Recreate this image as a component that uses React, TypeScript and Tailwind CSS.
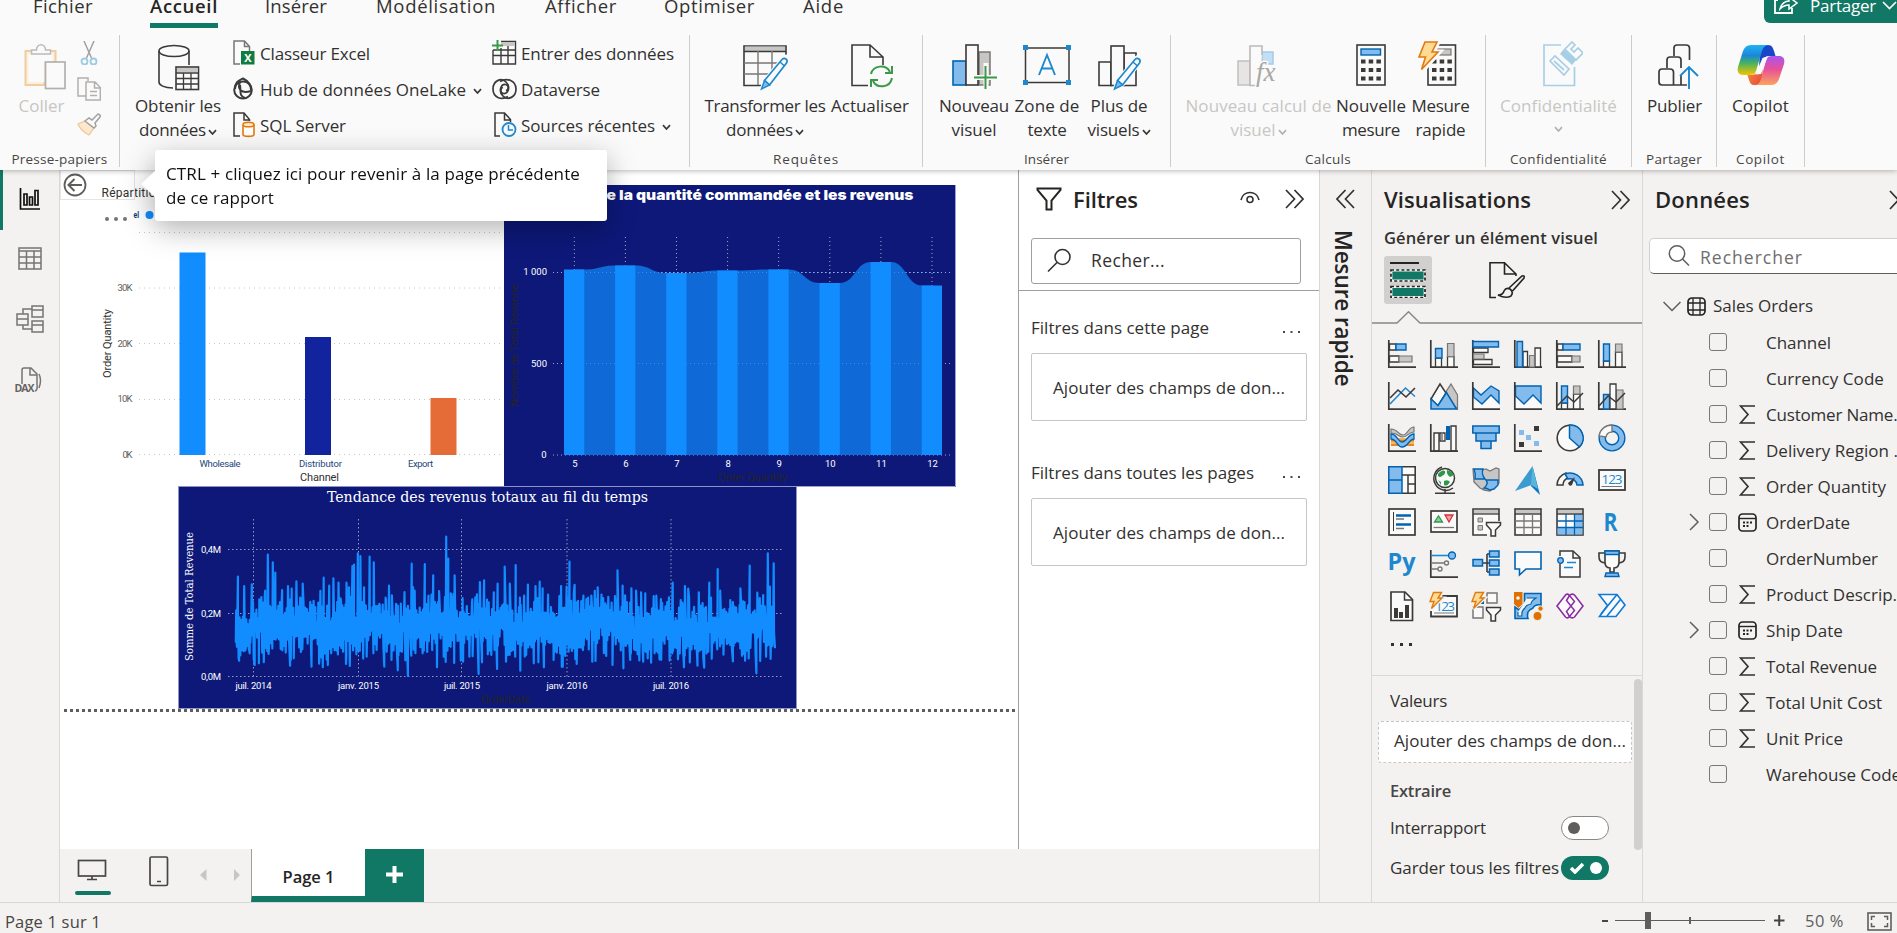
import { useLayoutEffect, useRef, useState } from "react";
import type { ReactNode } from "react";

const D = "#3b3a39";
const B = "#0063b1";
const F = "#83bcec";
const G = "#c8c6c4";
const M = "#797775";
const W = "#fafafa";

/* Single-line label whose tracking is computed so that it spans `w` pixels. */
function T({ w, className = "", children }: { w?: number; className?: string; children: string }) {
  const ref = useRef<HTMLSpanElement>(null);
  const [ls, setLs] = useState(0);
  useLayoutEffect(() => {
    if (!ref.current || !w) return;
    const vertical = ref.current.offsetHeight > ref.current.offsetWidth;
    const natural = vertical ? ref.current.offsetHeight : ref.current.getBoundingClientRect().width;
    setLs((w - natural) / children.length);
  }, [w, children]);
  return (
    <span ref={ref} className={`inline-block whitespace-nowrap ${className}`} style={{ letterSpacing: `${ls}px` }}>
      {children}
    </span>
  );
}

function Pic({ x, y, w, h, className = "", children }: { x: number; y: number; w: number; h: number; className?: string; children: ReactNode }) {
  return (
    <svg width={w} height={h} viewBox={`${x} ${y} ${w} ${h}`} fill="none" className={`block shrink-0 ${className}`}>
      {children}
    </svg>
  );
}

function Caret({ className = "text-[#3b3a39]" }: { className?: string }) {
  return (
    <svg width="9" height="7" viewBox="0 0 9 7" fill="none" className={`inline-block shrink-0 ${className}`}>
      <path d="M1 1.2 4.5 5 8 1.2" stroke="currentColor" strokeWidth="1.7" />
    </svg>
  );
}

/* ---------- ribbon ---------- */

const tabs: { name: string; w: number; ml: string; active?: boolean }[] = [
  { name: "Fichier", w: 60, ml: "ml-[33px]" },
  { name: "Accueil", w: 68, ml: "ml-[57px]", active: true },
  { name: "Insérer", w: 62, ml: "ml-[47px]" },
  { name: "Modélisation", w: 120, ml: "ml-[49px]" },
  { name: "Afficher", w: 72, ml: "ml-[49px]" },
  { name: "Optimiser", w: 91, ml: "ml-[47px]" },
  { name: "Aide", w: 41, ml: "ml-[48px]" },
];

function Group({ label, lw, className, children }: { label?: string; lw?: number; className: string; children: ReactNode }) {
  return (
    <div className={`flex h-[132px] shrink-0 flex-col border-r border-[#cfcdcb] ${className}`}>
      <div className="flex h-[114px] pt-[6px]">{children}</div>
      {label && (
        <div className="flex h-[18px] justify-center text-[13.5px] leading-[20px] text-[#484644]">
          <T w={lw}>{label}</T>
        </div>
      )}
    </div>
  );
}

function Big({ icon, lines, className, caret, off }: { icon: ReactNode; lines: [string, number][]; className: string; caret?: boolean; off?: boolean }) {
  return (
    <div className={`flex shrink-0 flex-col items-center text-[17px] leading-[24px] ${off ? "text-[#c8c6c4]" : "text-[#323130]"} ${className}`}>
      {icon}
      <div className="flex flex-col items-center pt-[3px]">
        {lines.map(([t, w], i) => (
          <div key={t} className="flex items-center gap-[2px]">
            <T w={w}>{t}</T>
            {caret && i === lines.length - 1 && lines.length > 1 && <Caret className={off ? "mt-1 text-[#b3b0ad]" : "mt-1 text-[#3b3a39]"} />}
          </div>
        ))}
        {caret && lines.length === 1 && <Caret className="mt-[8px] text-[#b3b0ad]" />}
      </div>
    </div>
  );
}

function Row({ icon, text, w, caret, wide }: { icon: ReactNode; text: string; w: number; caret?: boolean; wide?: boolean }) {
  return (
    <div className="flex h-[36px] items-center text-[17px] leading-[24px] text-[#323130]">
      <div className={wide ? "w-[29px]" : "w-[27px]"}>{icon}</div>
      <T w={w} className="mt-[1px]">{text}</T>
      {caret && <Caret className="mt-1 ml-[7px] text-[#3b3a39]" />}
    </div>
  );
}

const pencil = (dx: number) => (
  <g transform={`translate(${dx} 0)`}>
    <path d="M25 40 44 16.5c4 -3 7 -1 5 4L30.5 44.5 22 49z" fill={W} stroke={W} strokeWidth="3" />
    <path d="M25.5 39.500 43 18.500c2.500-2.500 6.500 0 4.500 3.500L30.500 44z" fill={W} stroke="#1e88cf" strokeWidth="1.700" />
    <path d="M25.500 39.500 30.500 44 22.500 48z" fill={F} stroke="#1e88cf" strokeWidth="1.500" />
    <path d="M41 21 45.500 25" stroke="#1e88cf" strokeWidth="1.500" />
  </g>
);

const IcPaste = (
  <Pic x={17.5} y={41} w={48} h={50}>
    <path d="M33 51H25V85H44V62H55V51H48" fill="#fdf0da" stroke="#f0cda0" strokeWidth="2" />
    <path d="M28 54H52V62H44V82H28Z" fill={W} />
    <path d="M31 54V50H36C36 43 45 43 45 50H50V54Z" fill={W} stroke="#bcbab8" strokeWidth="1.5" />
    <rect x="45" y="62" width="19.500" height="26.500" fill={W} stroke="#b3b0ad" strokeWidth="1.700" />
  </Pic>
);
const IcDb = (
  <Pic x={157} y={41} w={48} h={50}>
    <path d="M162 51V82C162 85 167 88 176 88M192 51V65" stroke={D} strokeWidth="1.600" />
    <ellipse cx="177" cy="51" rx="15" ry="5.500" stroke={D} strokeWidth="1.600" />
    <rect x="179" y="67" width="22.500" height="22.500" fill={W} stroke={D} strokeWidth="1.600" />
    <path d="M180 68h21v4h-21z" fill={G} />
    <path d="M179 73h22M179 78.500h22M179 84h22M186.500 73v16M194 73v16" stroke={D} strokeWidth="1.300" />
  </Pic>
);
const IcTransform = (
  <Pic x={0} y={0} w={48} h={50}>
    <path d="M3 44.500V5H45V44.500Z" fill={W} stroke={D} strokeWidth="1.600" />
    <path d="M4 5.500h40v4.500H4z" fill={G} />
    <path d="M3 10.500H45" stroke={D} strokeWidth="1.500" />
    <path d="M3 22H45M3 33H45M17 10V44M31 10V44" stroke={M} strokeWidth="1.400" />
    <path d="M28 46.500H47V18L44 17z" fill={W} />
    {pencil(-2)}
  </Pic>
);
const IcRefresh = (
  <Pic x={0} y={0} w={48} h={50}>
    <path d="M22 44.500H6V4H24L37 16V24M24 4V16H37" stroke={D} strokeWidth="1.600" />
    <path d="M25 33C27 24 40 23 44 31M46 25V32H39M46 37C44 47 31 48 27 40M25 46V39H32" stroke="#3a9a4a" strokeWidth="2" />
  </Pic>
);
const IcNewVisual = (
  <Pic x={0} y={0} w={48} h={50}>
    <rect x="3" y="20" width="13" height="24" fill={F} stroke={B} strokeWidth="1.600" />
    <rect x="29" y="11" width="11" height="33" fill={G} stroke={M} strokeWidth="1.500" />
    <rect x="16" y="4" width="12" height="40" fill={W} stroke={D} strokeWidth="1.600" />
    <path d="M36 22V48M23 36.500H47" stroke={W} strokeWidth="5" />
    <path d="M35.500 25V48M24 36.500H47" stroke="#3a9a4a" strokeWidth="2" />
  </Pic>
);
const IcTextBox = (
  <Pic x={0} y={0} w={48} h={50}>
    <rect x="2.500" y="7" width="43.500" height="34.500" stroke={D} strokeWidth="1.500" />
    <path d="M0 4h5v5H0zM43 4h5v5h-5zM0 39h5v5H0zM43 39h5v5h-5z" fill="#1e88cf" />
    <path d="M16 34 24 14 32 34M19 27.500H29.500" stroke="#1e88cf" strokeWidth="1.900" />
  </Pic>
);
const IcMoreVisuals = (
  <Pic x={0} y={0} w={48} h={50}>
    <path d="M4 21H16V44.500H4zM29 12H41V44.500H29z" fill={W} stroke={D} strokeWidth="1.600" />
    <rect x="16" y="5" width="13" height="39.500" fill={W} stroke={D} strokeWidth="1.600" />
    {pencil(-3)}
  </Pic>
);
const IcCalc = (
  <Pic x={0} y={0} w={48} h={50}>
    <rect x="10" y="4" width="28" height="40" fill={W} stroke={D} strokeWidth="1.600" />
    <rect x="14" y="8" width="19.500" height="6" fill={F} stroke={B} strokeWidth="1.400" />
    <path d="M14 20.500h20M14 29h20M14 37.500h20" stroke={D} strokeWidth="4" strokeDasharray="4.500 3.200" />
  </Pic>
);
const IcQuick = (
  <Pic x={0} y={0} w={48} h={50}>
    <rect x="11" y="4" width="27.500" height="40" fill={W} stroke={D} strokeWidth="1.600" />
    <rect x="16" y="8" width="18" height="6" fill={G} stroke={M} strokeWidth="1.200" />
    <path d="M15 20.500h20M15 29h20M15 37.500h20" stroke={D} strokeWidth="4" strokeDasharray="4.500 3.200" />
    <path d="M8 1H21L16 11H22L5 30L9 17H2Z" fill="#ffd483" stroke={W} strokeWidth="5" />
    <path d="M8 1H20L15 11H21L4.500 28.500L8.500 16H2Z" fill="#ffdb94" stroke="#e07a10" strokeWidth="1.600" />
  </Pic>
);
const IcFx = (
  <Pic x={0} y={0} w={48} h={50}>
    <rect x="3" y="20" width="12" height="24" fill="#e6e5e4" stroke="#c2c0be" strokeWidth="1.500" />
    <rect x="27" y="11" width="11" height="12" fill="#c3dff5" stroke="#a5cbe9" strokeWidth="1.500" />
    <path d="M27 14V5H15V44.500H22" fill={W} stroke="#bcbab8" strokeWidth="1.600" />
    <text x="21" y="40" fontFamily="Liberation Serif" fontStyle="italic" fontSize="27" fill="#a9a7a5" stroke={W} strokeWidth="3" paintOrder="stroke">fx</text>
  </Pic>
);
const IcSensitivity = (
  <Pic x={1534} y={41} w={48} h={50}>
    <path d="M1560 45H1543V85.500H1573.500V67" stroke="#a6cfe6" strokeWidth="1.700" />
    <path d="M1549 61 1554 56 1568 69 1563 75Z" stroke="#a6cfe6" strokeWidth="1.700" />
    <path d="M1553 61 1563 70" stroke="#a6cfe6" strokeWidth="1.700" />
    <path d="M1563 50 1560 54 1571 64 1574 60Z" fill="#a6cfe6" stroke="#a6cfe6" strokeWidth="1.500" />
    <path d="M1564 49 1575 60 1582 53 1577 48 1573 52 1570 49 1574 45 1571 42Z" fill={W} stroke="#a6cfe6" strokeWidth="1.700" />
  </Pic>
);
const IcPublish = (
  <Pic x={1650} y={41} w={48} h={50}>
    <path d="M1673 56V48Q1673 45 1676 45H1685Q1688.500 45 1688.500 48V60M1666 68V60Q1666 57 1669 57H1677Q1680 57 1680 60V68M1680 75V85M1658 72Q1658 69 1661 69H1669Q1672.500 69 1672.500 72V85H1661Q1658 85 1658 82ZM1672 85H1686" stroke={D} strokeWidth="1.700" />
    <path d="M1688 89V67M1679 76 1688 67 1697 76" stroke="#1e88cf" strokeWidth="1.900" />
  </Pic>
);
const IcCopilot = (
  <Pic x={1736} y={41} w={50} h={50}>
    <defs>
      <linearGradient id="ca" x1="0" y1="0" x2="0" y2="1">
        <stop offset="0" stopColor="#1fb3f2" />
        <stop offset=".35" stopColor="#1b86d8" />
        <stop offset=".6" stopColor="#45b25f" />
        <stop offset="1" stopColor="#f5c400" />
      </linearGradient>
      <linearGradient id="cb" x1="0" y1="0" x2="0" y2="1">
        <stop offset="0" stopColor="#a855f0" />
        <stop offset=".45" stopColor="#e84f9a" />
        <stop offset="1" stopColor="#fba45c" />
      </linearGradient>
      <linearGradient id="cc" x1="0" y1="0" x2="1" y2="1">
        <stop offset="0" stopColor="#fd9a3c" />
        <stop offset="1" stopColor="#e2453c" />
      </linearGradient>
    </defs>
    <path d="M1760 45H1768C1772 45 1773 48 1774 51L1775.500 56H1771C1766 56 1764 58 1763 61L1759 70Z" fill="#1846c9" />
    <path d="M1762 85H1754C1751 85 1750 83 1749 80L1747.500 75H1751C1755 75 1757 73 1758 70L1763 59Z" fill="url(#cc)" />
    <path d="M1751 45H1769C1765 45 1763 48 1762 51L1756 71C1755 74 1753 75 1750 75H1743C1738 75 1737 71 1738 67L1743 51C1744.500 47 1747 45 1751 45Z" fill="url(#ca)" />
    <path d="M1772 56H1779C1784 56 1785 60 1784 64L1779 79C1777.500 83 1775 85 1771 85H1755C1758 85 1760 82 1761 79L1766 60C1767 57 1769 56 1772 56Z" fill="url(#cb)" />
    <path d="M1762.500 58 1768 56 1761 74 1755.500 74.500Z" fill={W} />
  </Pic>
);

const IcExcel = (
  <Pic x={0} y={0} w={24} h={26}>
    <path d="M7 24H1V1H11.500L16.500 6.500V11M11.500 1V6.500H16.500" stroke={M} strokeWidth="1.500" />
    <rect x="8" y="11" width="13.500" height="13.500" fill="#107c41" />
    <text x="14.800" y="22" fontFamily="Open Sans" fontWeight="700" fontSize="11" textAnchor="middle" fill="white">X</text>
  </Pic>
);
const IcHub = (
  <Pic x={0} y={0} w={24} h={24}>
    <ellipse cx="10" cy="13" rx="8.800" ry="8.500" stroke={D} strokeWidth="2" />
    <path d="M2 12C2 5 5 4 10 1.500C15 4 18 8 18 13M7 5C4 12 8 17 18 14M7 8C8 15 6 19 12 21" stroke={D} strokeWidth="2" />
  </Pic>
);
const IcSql = (
  <Pic x={0} y={0} w={24} h={26}>
    <path d="M7 24H1V1H11L16.500 7.500V9M11 1V8H16" stroke={D} strokeWidth="1.500" />
    <path d="M10 13V22.500C10 25 21 25 21 22.500V13" fill="#fff" stroke="#e07a10" strokeWidth="1.600" />
    <ellipse cx="15.500" cy="12.500" rx="5.500" ry="2.300" fill="#ffe7c4" stroke="#e07a10" strokeWidth="1.600" />
  </Pic>
);
const IcEnter = (
  <Pic x={0} y={0} w={25} h={26}>
    <path d="M9 1.500H23.500V24H1V10M1 15.500H23M9 8V24M16 6V24M1 10H23" stroke={D} strokeWidth="1.400" />
    <path d="M9 2h14v4H9z" fill={G} />
    <path d="M5.500 0V11M0 5.500H11" stroke="#3a9a4a" strokeWidth="2" />
  </Pic>
);
const IcDataverse = (
  <Pic x={0} y={0} w={25} h={22}>
    <path d="M16 18.500C9 23 1 19 1 11C1 3 9 -1 14 4C19 9 16 16 11.500 15.500C8 15 8 10 11 9.500" stroke={D} strokeWidth="1.700" />
    <path d="M8 3.500C15 -1 24 3 24 11C24 19 16 23 11 18C6 13 9 6 13.500 6.500C17 7 17 12 14 12.500" stroke={D} strokeWidth="1.700" />
  </Pic>
);
const IcRecent = (
  <Pic x={-2} y={0} w={26} h={26}>
    <path d="M6 24H1V1H10.500L16.500 7.500V10M10.500 1V8H16" stroke={D} strokeWidth="1.500" />
    <circle cx="15" cy="17.500" r="6.500" fill={W} stroke="#1e88cf" strokeWidth="1.800" />
    <path d="M14.500 13V18H19" stroke="#1e88cf" strokeWidth="1.500" />
  </Pic>
);

function Ribbon() {
  return (
    <header className="relative z-10 h-[170px] shrink-0 bg-[#fafafa] shadow-[0_1px_5px_rgba(0,0,0,0.28)]">
      <div className="flex h-[35px] justify-between">
        <div className="flex h-[28px]">
          {tabs.map((t) => (
            <div
              key={t.name}
              className={`${t.ml} flex flex-col text-[18.5px] leading-[24px] ${t.active ? "border-b-[5px] border-[#117865] font-semibold text-[#252423]" : "text-[#323130]"}`}
            >
              <T w={t.w} className="-mt-[6px]">{t.name}</T>
            </div>
          ))}
        </div>
        <div className="flex h-[23px] w-[133px] shrink-0 overflow-hidden rounded-bl-[6px] bg-[#117865] pl-[10px] text-[17px] leading-[24px] text-white">
          <Pic x={0} y={0} w={24} h={15}>
            <path d="M4 0H1V13H18V8" stroke="#fff" strokeWidth="1.800" />
            <path d="M6 9C7 4 11 1 15 1V-3L23 3L15 9V5C11 5 8 7 6 9Z" stroke="#fff" strokeWidth="1.500" />
          </Pic>
          <T w={66} className="-mt-[6px] ml-[12px]">Partager</T>
          <Pic x={0} y={0} w={15} h={12} className="ml-[6px]">
            <path d="M1 2 7.500 8.500 14 2" stroke="#fff" strokeWidth="1.600" />
          </Pic>
        </div>
      </div>
      <div className="flex">
        <Group label="Presse-papiers" lw={96} className="w-[120px]">
          <Big off className="w-[77px] pl-[6px]" icon={IcPaste} lines={[["Coller", 46]]} />
          <div className="flex flex-col gap-[12px]">
            <Pic x={0} y={0} w={24} h={24}>
              <path d="M7 0 14.500 17M17 0 9.500 17" stroke="#a3a19f" strokeWidth="1.500" />
              <circle cx="7.500" cy="20.500" r="3" stroke="#9ccbe4" strokeWidth="1.800" />
              <circle cx="16.500" cy="20.500" r="3" stroke="#9ccbe4" strokeWidth="1.800" />
            </Pic>
            <Pic x={0} y={0} w={24} h={24}>
              <path d="M9 19H1V1H11V4" stroke="#b3b0ad" strokeWidth="1.500" />
              <path d="M9 5H18L23.300 10.500V23H9ZM17.500 5V11H23M13 14.500H20M13 18.500H20" stroke="#b3b0ad" strokeWidth="1.500" />
            </Pic>
            <Pic x={0} y={0} w={24} h={24}>
              <path d="M1 11 8 8 17 15 12 22Q4 18 1 11Z" fill="#fde8cd" stroke="#efc798" strokeWidth="1.300" />
              <path d="M8 8 12 5 15 7 21 1Q24 2 23 4L18 10 19 13 17 15Z" fill={W} stroke="#a3a19f" strokeWidth="1.500" />
            </Pic>
          </div>
        </Group>
        <Group className="w-[570px]">
          <Big className="w-[113px] pl-[3px]" icon={IcDb} lines={[["Obtenir les", 86], ["données", 67]]} caret />
          <div className="-mt-[6px] flex w-[259px] flex-col">
            <Row icon={IcExcel} text="Classeur Excel" w={110} />
            <Row icon={IcHub} text="Hub de données OneLake" w={206} caret />
            <Row icon={IcSql} text="SQL Server" w={86} />
          </div>
          <div className="-mt-[6px] flex flex-col">
            <Row wide icon={IcEnter} text="Entrer des données" w={153} />
            <Row wide icon={IcDataverse} text="Dataverse" w={79} />
            <Row wide icon={IcRecent} text="Sources récentes" w={134} caret />
          </div>
        </Group>
        <Group label="Requêtes" lw={66} className="w-[233px]">
          <Big className="w-[150px]" icon={IcTransform} lines={[["Transformer les", 121], ["données", 67]]} caret />
          <Big className="w-[60px]" icon={IcRefresh} lines={[["Actualiser", 78]]} />
        </Group>
        <Group label="Insérer" lw={45} className="w-[248px]">
          <Big className="w-[102px]" icon={IcNewVisual} lines={[["Nouveau", 70], ["visuel", 45]]} />
          <Big className="w-[44px]" icon={IcTextBox} lines={[["Zone de", 65], ["texte", 39]]} />
          <Big className="w-[100px]" icon={IcMoreVisuals} lines={[["Plus de", 57], ["visuels", 52]]} caret />
        </Group>
        <Group label="Calculs" lw={46} className="w-[315px]">
          <Big off className="w-[175px]" icon={IcFx} lines={[["Nouveau calcul de", 146], ["visuel", 45]]} caret />
          <Big className="w-[50px]" icon={IcCalc} lines={[["Nouvelle", 70], ["mesure", 58]]} />
          <Big className="w-[89px]" icon={IcQuick} lines={[["Mesure", 58], ["rapide", 50]]} />
        </Group>
        <Group label="Confidentialité" lw={97} className="w-[146px]">
          <Big off className="w-[145px]" icon={IcSensitivity} lines={[["Confidentialité", 117]]} caret />
        </Group>
        <Group label="Partager" lw={56} className="w-[85px]">
          <Big className="w-[85px]" icon={IcPublish} lines={[["Publier", 55]]} />
        </Group>
        <Group label="Copilot" lw={49} className="w-[88px]">
          <Big className="w-[87px]" icon={IcCopilot} lines={[["Copilot", 57]]} />
        </Group>
      </div>
    </header>
  );
}

/* ---------- left navigation ---------- */

function Nav() {
  return (
    <nav className="flex w-[60px] shrink-0 flex-col border-r border-[#dad8d6]">
      <div className="flex h-[60px] justify-center border-l-[3px] border-[#117865] pt-[18px]">
        <Pic x={19} y={188} w={24} h={24}>
          <path d="M20.500 188V209H40" stroke="#11100f" strokeWidth="1.700" />
          <path d="M24 194H27V205H24zM29.500 197H32.500V205H29.500zM35 190.500H38V205H35z" stroke="#11100f" strokeWidth="1.700" />
        </Pic>
      </div>
      <div className="flex h-[60px] justify-center pt-[17px]">
        <Pic x={18} y={247} w={24} h={23}>
          <path d="M19 248H41V269H19zM19 251H41M19 257H41M19 263H41M26.500 251V269M34 251V269" stroke="#767472" strokeWidth="1.500" />
        </Pic>
      </div>
      <div className="flex h-[60px] justify-center pt-[14px]">
        <Pic x={16} y={304} w={28} h={30}>
          <path d="M17 314H28V325H17zM17 319H28M32 306H43V317H32zM32 310H43M32 321H43V332H32zM32 325H43M23 314V309H32M23 325V329H32" stroke="#767472" strokeWidth="1.500" />
        </Pic>
      </div>
      <div className="flex h-[60px] pt-[16px] pl-[14px]">
        <Pic x={14} y={366} w={28} h={28}>
          <path d="M22 384V370Q22 368 24 368H31L37 374V384M30 368V375H37M39 374Q42 380 39 388" stroke="#767472" strokeWidth="1.500" />
          <text x="14.500" y="391.500" fontFamily="Open Sans" fontWeight="700" fontSize="10.500" textLength="20" fill="#666462">DAX</text>
          <path d="M35 391Q38 390 37 384" stroke="#767472" strokeWidth="1.500" />
        </Pic>
      </div>
    </nav>
  );
}

/* ---------- report canvas ---------- */

const DIN = "Roboto";

function ChannelChart() {
  const grid = [232.5, 288, 343.5, 399.5, 454.5];
  const bars: [number, number, number, string][] = [
    [179.5, 252.5, 26, "#118dff"],
    [305, 337, 26, "#12239e"],
    [430.5, 398, 26, "#e66c37"],
  ];
  return (
    <Pic x={60} y={170} w={444} h={318}>
      {grid.map((y) => (
        <path key={y} d={`M139 ${y}H501`} stroke="#c8c6c4" strokeDasharray="1 4" />
      ))}
      {bars.map(([x, y, w, c]) => (
        <rect key={x} x={x} y={y} width={w} height={455 - y} fill={c} />
      ))}
      <g fontFamily={DIN} fontSize="9.500" fill="#605e5c">
        <text x="132.500" y="291" textAnchor="end" textLength="15">30K</text>
        <text x="132.500" y="346.500" textAnchor="end" textLength="15">20K</text>
        <text x="132.500" y="402" textAnchor="end" textLength="15">10K</text>
        <text x="132.500" y="458" textAnchor="end" textLength="10">0K</text>
      </g>
      <g fontFamily={DIN} fontSize="9.500" fill="#24467a">
        <text x="199.500" y="467" textLength="41">Wholesale</text>
        <text x="299" y="467" textLength="43">Distributor</text>
        <text x="408" y="467" textLength="25">Export</text>
      </g>
      <g fontFamily={DIN} fill="#323130">
        <text x="300" y="481" fontSize="11" textLength="39">Channel</text>
        <text transform="translate(111 378) rotate(-90)" fontSize="11" textLength="69">Order Quantity</text>
        <text x="101.500" y="197" fontSize="12" textLength="54">Répartitio</text>
      </g>
      <g fill="#777573">
        <circle cx="107" cy="219" r="2" />
        <circle cx="116" cy="219" r="2" />
        <circle cx="125" cy="219" r="2" />
      </g>
      <text x="133.500" y="218" fontFamily={DIN} fontSize="9" fontWeight="700" fill="#12397a" textLength="5.500" lengthAdjust="spacingAndGlyphs">el</text>
      <circle cx="149.500" cy="215" r="4" fill="#118dff" />
      <rect x="60.500" y="170.500" width="74" height="29" stroke="#e6e5e4" />
      <circle cx="75" cy="185" r="10.500" stroke="#605e5c" strokeWidth="1.800" />
      <path d="M82 185H69M74.500 179 68.500 185 74.500 191" stroke="#605e5c" strokeWidth="2" />
    </Pic>
  );
}

function RibbonChart() {
  const xs = [574.3, 625.4, 676.5, 727.6, 778.7, 829.8, 880.9, 932];
  const tops = [269.5, 265.5, 273, 270.5, 269.5, 283, 262, 285.5];
  let area = `M${xs[0]} 455V${tops[0]}`;
  for (let i = 1; i < xs.length; i++) {
    const a = xs[i - 1] + 10;
    const b = xs[i] - 10;
    const m = (a + b) / 2;
    area += `H${a}C${m} ${tops[i - 1]} ${m} ${tops[i]} ${b} ${tops[i]}`;
  }
  area += `H${xs[7]}V455Z`;
  return (
    <Pic x={504} y={185} w={452} h={302}>
      <rect x="504" y="185" width="452" height="302" fill="#0d1879" />
      <path d="M955.500 185V486.500H504" stroke="#9fa4cf" />
      {xs.map((x) => (
        <path key={x} d={`M${x} 237V455`} stroke="#a3a7cc" strokeDasharray="1 3" />
      ))}
      <path d="M553 272.500H951M553 363.500H951M553 455H951" stroke="#a3a7cc" strokeDasharray="1 3" />
      <path d={area} fill="#0f69d6" />
      <path d="M574 272.500H942M574 363.500H942" stroke="#3f8be6" strokeDasharray="1 3" />
      {xs.map((x, i) => (
        <rect key={x} x={x - 10.3} y={tops[i]} width="20.300" height={455 - tops[i]} fill="#118dff" />
      ))}
      <g fontFamily={DIN} fontSize="9.500" fill="#ffffff">
        <text x="547" y="275" textAnchor="end">1 000</text>
        <text x="547" y="367" textAnchor="end">500</text>
        <text x="546.500" y="458" textAnchor="end">0</text>
        {xs.map((x, i) => (
          <text key={x} x={x + 0.5} y="467" textAnchor="middle">{i + 5}</text>
        ))}
      </g>
      <g fontFamily={DIN} fontSize="11" fill="#252423">
        <text x="718" y="481" textLength="69">Order Quantity</text>
        <text transform="translate(518 407) rotate(-90)" textLength="123">Nombre de Total Revenue</text>
      </g>
      <text x="606.500" y="200" fontFamily="Inter" fontSize="13.500" fontWeight="900" fill="#fff" textLength="307" lengthAdjust="spacingAndGlyphs">
        e la quantité commandée et les revenus
      </text>
    </Pic>
  );
}

const highs: [number, number][] = [[185,290],[200,318],[218,313],[236,358],[250,332],[256,224],[268,247],[274,278],[290,330],[304,318],[313,326],[324,304],[339,311],[376,368],[389,293],[402,317],[412,295],[424,308],[430,363],[443,308],[457,258],[461,254],[470,220],[476,228],[485,322],[498,230],[508,247],[522,374],[536,353],[544,317],[551,346],[572,371],[598,251],[604,370],[629,252],[638,347],[649,286],[663,333],[680,170],[685,236],[691,340],[700,286],[719,354],[742,358],[760,306],[770,301],[793,337],[802,311],[819,260],[831,311],[845,255],[855,353],[874,314],[892,318],[902,305],[909,325],[922,344],[966,320],[973,245],[983,340],[1006,347],[1026,376],[1040,322],[1058,370],[1087,271],[1099,317],[1120,325],[1131,332],[1143,337],[1153,340],[1179,347],[1190,357],[1218,308],[1237,360],[1247,318],[1255,326],[1280,337],[1305,308],[1325,267],[1331,332],[1355,360],[1379,325],[1401,257],[1419,338],[1433,345],[1444,220],[1449,320],[1458,250]];
const lows: [number, number][] = [[180,488],[188,542],[205,493],[213,520],[225,555],[235,550],[258,522],[295,498],[309,557],[318,535],[338,508],[360,560],[378,551],[396,539],[420,512],[435,515],[442,552],[451,558],[468,478],[491,530],[507,520],[533,560],[550,540],[565,571],[589,588],[597,527],[624,520],[658,562],[674,530],[699,549],[720,545],[735,530],[757,582],[765,547],[787,525],[801,567],[822,545],[844,530],[856,572],[870,525],[888,550],[899,547],[912,562],[935,540],[957,560],[990,552],[1005,510],[1027,545],[1060,528],[1075,555],[1101,565],[1117,540],[1148,545],[1175,520],[1217,520],[1245,562],[1277,557],[1293,563],[1324,508],[1361,544],[1390,542],[1417,580],[1426,543],[1440,530],[1461,505]];

/* Daily values between the recorded highs and lows, from a seeded generator. */
function buildTrend() {
  let seed = 11;
  const rnd = () => {
    seed = (seed * 1103515245 + 12345) % 2147483648;
    return seed / 2147483648;
  };
  const pts: [number, number][] = [...highs, ...lows];
  let center = 435;
  for (let x = 181; x < 1460; x += 4) {
    center = 0.55 * center + 0.45 * (390 + 90 * rnd());
    const reach = 18 + 75 * rnd() * rnd();
    pts.push([x, center - reach - 25 * rnd()]);
    pts.push([x + 1.7, center + reach + 45 * rnd()]);
  }
  pts.sort((a, b) => a[0] - b[0]);
  return pts.map(([x, y]) => `${(160 + x / 2.3758).toFixed(1)},${(480 + y / 3).toFixed(1)}`).join(" ");
}
const trend = buildTrend();

function TrendChart() {
  return (
    <Pic x={178} y={486} w={619} h={223}>
      <rect x="178.500" y="486.500" width="618" height="222" fill="#0d1879" stroke="#8f94c6" />
      <path d="M228 549.500H783M228 613.500H783M228 676.500H783M253.500 519V677M358.500 519V677M461.500 519V677M567 519V677M671 519V677" stroke="#9296c2" strokeDasharray="1.500 2.500" />
      <polyline points={trend} stroke="#118dff" strokeWidth="2.200" strokeLinejoin="round" />
      <text x="327" y="502" fontFamily="DejaVu Serif Condensed, DejaVu Serif" fontSize="15.500" fill="#fff" textLength="321" lengthAdjust="spacingAndGlyphs">
        Tendance des revenus totaux au fil du temps
      </text>
      <text transform="translate(192.500 661) rotate(-90)" fontFamily="DejaVu Serif Condensed, DejaVu Serif" fontSize="10.500" fill="#fff" textLength="129" lengthAdjust="spacingAndGlyphs">
        Somme de Total Revenue
      </text>
      <g fontFamily={DIN} fontSize="9.500" fill="#fff">
        <text x="221" y="553" textAnchor="end" textLength="20">0,4M</text>
        <text x="221" y="616.500" textAnchor="end" textLength="20">0,2M</text>
        <text x="221" y="680" textAnchor="end" textLength="20">0,0M</text>
        <text x="253.500" y="689" textAnchor="middle" textLength="36">juil. 2014</text>
        <text x="358.500" y="689" textAnchor="middle" textLength="41">janv. 2015</text>
        <text x="462" y="689" textAnchor="middle" textLength="36">juil. 2015</text>
        <text x="567" y="689" textAnchor="middle" textLength="41">janv. 2016</text>
        <text x="671" y="689" textAnchor="middle" textLength="36">juil. 2016</text>
      </g>
      <text x="481" y="703" fontFamily={DIN} fontSize="11" fill="#252423" textLength="49">OrderDate</text>
    </Pic>
  );
}

function Canvas() {
  return (
    <main className="relative h-[679px] w-[958px] shrink-0 bg-white">
      <div className="absolute top-0 left-0"><ChannelChart /></div>
      <div className="absolute top-[15px] left-[444px]"><RibbonChart /></div>
      <div className="absolute top-[316px] left-[118px]"><TrendChart /></div>
      <svg className="absolute top-[539px] left-[4px]" width="952" height="3">
        <path d="M0 1.500H952" stroke="#605e5c" strokeWidth="3" strokeDasharray="3 3" />
      </svg>
    </main>
  );
}

function PageTabs() {
  return (
    <div className="flex h-[53px]">
      <div className="flex w-[191px] pl-[15px]">
        <div className="flex h-[46px] w-[36px] flex-col items-center justify-between pt-[10px]">
          <Pic x={0} y={0} w={30} h={22} className="-ml-[2px]">
            <rect x="1.500" y="1.500" width="27" height="15.500" stroke="#484644" strokeWidth="1.700" />
            <path d="M15 17V20M10 20.500H20" stroke="#484644" strokeWidth="1.700" />
          </Pic>
          <div className="h-[4px] w-full rounded-full bg-[#117865]" />
        </div>
        <Pic x={0} y={0} w={20} h={31} className="mt-[7px] ml-[38px]">
          <rect x="1" y="1" width="17.500" height="28.500" rx="1.500" stroke="#484644" strokeWidth="1.700" />
          <path d="M8 25.500H12" stroke="#484644" strokeWidth="1.500" />
        </Pic>
        <Pic x={0} y={0} w={40} h={12} className="mt-[20px] ml-[31px]">
          <path d="M6.500 0V12L0 6zM34 0V12L40 6z" fill="#c8c6c4" />
        </Pic>
      </div>
      <div className="flex w-[114px] justify-center border-b-[6px] border-l border-l-[#a19f9d] border-b-[#117865] bg-white pt-[16px] text-[16.5px] leading-[24px] font-semibold text-[#252423]">
        <T w={52}>Page 1</T>
      </div>
      <div className="flex w-[59px] justify-center bg-[#117865] pt-[17px]">
        <Pic x={0} y={0} w={17} h={17}>
          <path d="M8.500 0V17M0 8.500H17" stroke="#fff" strokeWidth="4" />
        </Pic>
      </div>
    </div>
  );
}

function Tooltip() {
  return (
    <div className="absolute top-[150px] left-[155px] z-20 h-[71px] w-[452px] rounded-[3px] bg-white pt-[12px] pl-[11px] text-[17px] leading-[24px] text-[#11100f] drop-shadow-[0_8px_14px_rgba(0,0,0,0.3)]">
      <svg className="absolute top-[20px] -left-[14px]" width="15" height="28">
        <path d="M15 0 0 14 15 28z" fill="#fff" />
      </svg>
      <div className="flex flex-col items-start">
        <T w={414}>CTRL + cliquez ici pour revenir à la page précédente</T>
        <T w={108}>de ce rapport</T>
      </div>
    </div>
  );
}

/* ---------- right panes ---------- */

function Chevrons({ left, className = "" }: { left?: boolean; className?: string }) {
  return (
    <svg width="19" height="20" viewBox="0 0 19 20" fill="none" className={`shrink-0 ${className}`}>
      <path d={left ? "M9.500 1 1 10 9.500 19M18 1 9.500 10 18 19" : "M1 1 9.500 10 1 19M9.500 1 18 10 9.500 19"} stroke="#323130" strokeWidth="1.700" />
    </svg>
  );
}

function FilterSection({ title, w }: { title: string; w: number }) {
  return (
    <div className="flex flex-col">
      <div className="flex h-[24px] justify-between pr-[6px] text-[17px] leading-[24px] text-[#323130]">
        <T w={w}>{title}</T>
        <svg width="19" height="3" className="mt-[15px]"><path d="M1 0h2v2h-2zM8.500 0h2v2h-2zM16 0h2v2h-2z" fill="#484644" /></svg>
      </div>
      <div className="mt-[13px] flex h-[68px] items-center rounded-[2px] border border-[#c8c6c4] pl-[21px] text-[17px] leading-[24px] text-[#323130]">
        <T w={232} className="mt-[1px]">Ajouter des champs de don...</T>
      </div>
    </div>
  );
}

function Filters() {
  return (
    <section className="flex h-[679px] w-[301px] shrink-0 flex-col border-l border-[#a19f9d] bg-white">
      <div className="flex h-[121px] flex-col border-b border-[#a19f9d] pt-[15px] pl-[12px]">
        <div className="flex h-[28px] items-center pl-[5px]">
          <svg width="26" height="24" viewBox="0 0 26 24" fill="none">
            <path d="M1.500 1.500H24.500V3L15.500 13.500V22.500H10.500V13.500L1.500 3Z" stroke="#252423" strokeWidth="2" />
          </svg>
          <T w={65} className="-mt-[1px] ml-[11px] text-[22px] leading-[28px] font-semibold text-[#252423]">Filtres</T>
          <svg width="20" height="14" viewBox="0 0 20 14" fill="none" className="-mt-[2px] ml-[102px]">
            <path d="M1 9C3 -1 17 -1 19 9" stroke="#323130" strokeWidth="1.600" />
            <circle cx="10" cy="8.500" r="3" stroke="#323130" strokeWidth="1.600" />
          </svg>
          <Chevrons className="ml-[25px]" />
        </div>
        <div className="mt-[25px] flex h-[46px] w-[270px] items-center rounded-[3px] border border-[#a19f9d] pl-[15px]">
          <svg width="25" height="25" viewBox="0 0 25 25" fill="none" className="-mt-[1px]">
            <circle cx="15.500" cy="9" r="7.500" stroke="#323130" strokeWidth="1.600" />
            <path d="M10 14.500 1 23.500" stroke="#323130" strokeWidth="1.600" />
          </svg>
          <T w={74} className="-mt-[2px] ml-[19px] text-[17.5px] leading-[24px] text-[#323130]">Recher...</T>
        </div>
      </div>
      <div className="flex flex-col gap-[40px] pt-[25px] pr-[12px] pl-[12px]">
        <FilterSection title="Filtres dans cette page" w={178} />
        <FilterSection title="Filtres dans toutes les pages" w={223} />
      </div>
    </section>
  );
}

const lightning = (
  <>
    <path d="M4 0H13L9 6H13L1 17L4 9H-1Z" fill="#f3f2f1" stroke="#f3f2f1" strokeWidth="3" />
    <path d="M3.500 .5H11.500L8 6H12L1.500 16.500L4 9.500H0Z" fill="#ffdb94" stroke="#e07a10" strokeWidth="1.400" />
  </>
);
const axes = <path d="M.8 0V27.200H28" stroke={D} strokeWidth="1.700" />;

const visuals: ReactNode[] = [
  <>{axes}<path d="M1.500 4H8V10H1.500zM1.500 16H11V22H1.500z" fill={W} stroke={D} strokeWidth="1.300" /><path d="M8 4H18V10H8z" fill={F} stroke={B} strokeWidth="1.400" /><path d="M11 16H24V22H11z" fill={G} stroke={M} strokeWidth="1.200" /></>,
  <>{axes}<path d="M5.500 18H11.500V27H5.500zM17.500 16.500H24V27H17.500z" fill={W} stroke={D} strokeWidth="1.300" /><path d="M5.500 8.500H12V18H5.500z" fill={F} stroke={B} strokeWidth="1.400" /><path d="M17.500 3.500H24V16.500H17.500z" fill={G} stroke={M} strokeWidth="1.200" /></>,
  <>{axes}<path d="M1.500 8H16V12.500H1.500zM1.500 19.500H20V24.500H1.500z" fill={W} stroke={D} strokeWidth="1.300" /><path d="M1 1.500H26.500V7H1z" fill={F} stroke={B} strokeWidth="1.400" /><path d="M1.500 14H12V19H1.500z" fill={G} stroke={M} strokeWidth="1.200" /></>,
  <>{axes}<path d="M9 11.500H13.500V27H9zM21 8H26.500V27H21z" fill={W} stroke={D} strokeWidth="1.300" /><path d="M3 1.500H8.500V27H3z" fill={F} stroke={B} strokeWidth="1.400" /><path d="M15.500 15.500H20.500V27H15.500z" fill={G} stroke={M} strokeWidth="1.200" /></>,
  <>{axes}<path d="M1.500 4H7V10H1.500zM1.500 16H16V22H1.500z" fill={W} stroke={D} strokeWidth="1.300" /><path d="M7 4H24V10H7z" fill={F} stroke={B} strokeWidth="1.400" /><path d="M16 16H24V22H16z" fill={G} stroke={M} strokeWidth="1.200" /></>,
  <>{axes}<path d="M5.500 21H11.500V27H5.500zM17.500 12H24V27H17.500z" fill={W} stroke={D} strokeWidth="1.300" /><path d="M5.500 4H11.500V21H5.500z" fill={F} stroke={B} strokeWidth="1.400" /><path d="M17.500 4H24V12H17.500z" fill={G} stroke={M} strokeWidth="1.200" /></>,

  <><path d="M2 22 17.500 6 27 14.500" stroke="#1e88cf" strokeWidth="1.600" /><path d="M2 16 10 8 18 15 27 6" stroke={D} strokeWidth="1.600" />{axes}</>,
  <><path d="M21 2 27.500 13V27L14 13Z" fill={G} stroke={M} strokeWidth="1.200" /><path d="M1 17 10 2 16 11 8 24Z" fill={W} stroke={D} strokeWidth="1.500" /><path d="M1 17 8 23.500 16.500 10.500 26.500 27H1Z" fill={F} stroke={B} strokeWidth="1.500" /></>,
  <><path d="M1.500 22 9 16 12 22 19 13 27 21V26.500H1.500Z" fill={W} /><path d="M1.500 6 9 13 19 4 27 9V21L19 13 10 22 1.500 15Z" fill={F} stroke={B} strokeWidth="1.400" />{axes}</>,
  <><path d="M1.500 14 9 22 19 13 27 21V27H1.500Z" fill={W} /><path d="M1.500 4H27V21L19 13 10 22 1.500 14Z" fill={F} stroke={B} strokeWidth="1.400" />{axes}</>,
  <>{axes}<path d="M5.500 21H11.500V27H5.500zM17.500 12H24V27H17.500z" fill={W} stroke={D} strokeWidth="1.300" /><path d="M5.500 4H11.500V21H5.500z" fill={F} stroke={B} strokeWidth="1.400" /><path d="M17.500 4H24V12H17.500z" fill={G} stroke={M} strokeWidth="1.200" /><path d="M1 24 11 14 18 20 27 11" stroke={D} strokeWidth="1.500" /></>,
  <>{axes}<path d="M5.500 12.500H11.500V27H5.500z" fill={F} stroke={B} strokeWidth="1.400" /><path d="M18 8H25V27H18z" fill={G} stroke={M} strokeWidth="1.200" /><path d="M12 2H18V27H12z" fill={W} stroke={D} strokeWidth="1.300" /><path d="M1 24 10 14 18 20 27 11" stroke={D} strokeWidth="1.500" /></>,

  <><path d="M3 14H26V22H3z" fill="#ffb45c" /><path d="M3 16.500H26M3 21H26" stroke="#e07a10" strokeWidth="1.600" /><path d="M3 5C10 5 10 11 15 11C20 11 20 3 26 3V8C20 8 20 13 15 13C10 13 10 9 3 9Z" fill={G} stroke={M} strokeWidth="1.200" /><path d="M3 10C9 10 10 18 14 18C19 18 20 10 26 10V15C21 15 20 23 14 23C9 23 9 15 3 15Z" fill={F} stroke={B} strokeWidth="1.300" />{axes}</>,
  <><path d="M4 9H9V27H4zM21 2H26V27H21z" fill={W} stroke={D} strokeWidth="1.400" /><path d="M10 9H15V17H10z" fill={W} stroke={D} strokeWidth="1.300" /><path d="M16 2H20V16H16z" fill={B} /><path d="M12 8V17" stroke={M} strokeWidth="1.500" />{axes}</>,
  <path d="M.8 2H27.200V9H.8zM4 9H24V17H4zM9 17H19V24.500H9z" fill={F} stroke={B} strokeWidth="1.500" />,
  <>{axes}<path d="M5 6h5v5H5zM12 11h5v5h-5zM20 17h5v5h-5z" fill={F} /><path d="M20 2h5v5h-5zM5 18h5v5H5z" fill={D} /></>,
  <><circle cx="14" cy="14" r="12.800" fill={W} stroke={D} strokeWidth="1.600" /><path d="M13.500 1A13 13 0 0 1 23.500 23L13.500 14Z" fill={F} stroke={B} strokeWidth="1.500" /></>,
  <><circle cx="14" cy="14" r="9.800" stroke={B} strokeWidth="7.500" /><circle cx="14" cy="14" r="9.800" stroke={F} strokeWidth="4.700" /><path d="M1 12A13 13 0 0 1 14 1V8A6 6 0 0 0 8 13Z" fill={W} stroke={M} strokeWidth="1.400" /></>,

  <><path d="M.8 .8H27.200V27.200H.8z" fill={W} stroke={D} strokeWidth="1.600" /><path d="M.8 .8H14V27.200H.8zM.8 14H14" fill={F} stroke={B} strokeWidth="1.500" /><path d="M14 9H27M20 9V27M20 18H27" stroke={D} strokeWidth="1.500" /></>,
  <><circle cx="15" cy="12" r="9.500" fill={W} stroke={D} strokeWidth="1.500" /><path d="M8 8Q12 3 15 5Q16 8 12 10Q10 12 8 10zM17 4Q22 5 24 9L20 11Q16 8 17 4zM14 15Q18 13 20 16Q17 21 14 19zM8 14L11 16L11 19z" fill="#2d9a48" /><path d="M12 1A12 12 0 1 0 23 22M15 23V27M5 27.200H25" stroke={D} strokeWidth="1.500" /></>,
  <><path d="M1 3Q8 5 14 3L18 5 24 2 27 3V17L23 20 18 25 12 24 8 22 2 16Z" fill={G} stroke={M} strokeWidth="1.300" /><path d="M2 3H11Q9 8 13 13L3 13Q4 8 2 3ZM14 14H26V19L22 23 18 24Q15 22 12 22Q17 18 14 14Z" fill={F} stroke={B} strokeWidth="1.400" /></>,
  <><path d="M18.500 0 26 29 17 20Z" fill="#0a74c8" /><path d="M18.500 0 1 25 17.500 19Z" fill="#3b9bd0" /><path d="M18.500 0 24 23 17 19Z" fill="#57b6dc" /></>,
  <><path d="M1 19A13 13 0 0 1 10 7L12 12Q7 14 7 19Z" fill={W} stroke={D} strokeWidth="1.500" /><path d="M9 8A13 13 0 0 1 27 19H21A7 7 0 0 0 12 13Z" fill={F} stroke={B} strokeWidth="1.500" /><path d="M19 11 16 19Q13 21 12 17Z" fill={D} /></>,
  <><rect x="1" y="4" width="26" height="20" fill={W} stroke={D} strokeWidth="1.800" /><text x="14" y="18" textAnchor="middle" fontFamily="Open Sans" fontSize="13.500" textLength="21" fill="#1e88cf">123</text><path d="M3.500 20.500H24" stroke={M} /></>,

  <><rect x="1" y="1" width="26" height="26" fill={W} stroke={D} strokeWidth="1.700" /><path d="M5.500 4V23" stroke={D} /><path d="M8 7.500H23M8 16.500H23" stroke={B} strokeWidth="2.400" /><path d="M8 11H16M8 20.500H16" stroke={M} strokeWidth="1.400" /></>,
  <><rect x="1" y="3" width="26" height="21" fill={W} stroke={D} strokeWidth="1.700" /><path d="M4.500 14H12.500L8.500 8z" fill="#8fce9b" stroke="#2d9a48" strokeWidth="1.300" /><path d="M15 7H23L19 14z" fill="#f29ba0" stroke="#d13438" strokeWidth="1.300" /><path d="M3.500 19.500H24" stroke={M} strokeWidth="1.300" /></>,
  <><path d="M15 27H1V1H27V13" fill={W} stroke={D} strokeWidth="1.600" /><path d="M2 2h24v3.500H2z" fill={G} /><path d="M1 6H27" stroke={D} strokeWidth="1.300" /><path d="M6 10H10.500V14H6zM6 17.500H10.500V22H6z" fill={G} stroke={M} /><path d="M14.500 14.500H28.500V17L23.500 22V28H19V22L14.500 17Z" fill={W} stroke={D} strokeWidth="1.500" /></>,
  <><rect x="1" y="1" width="26" height="26" fill={W} stroke={D} strokeWidth="1.600" /><path d="M2 2h24v3.500H2z" fill={G} /><path d="M1 6H27" stroke={D} strokeWidth="1.400" /><path d="M1 13H27M1 19.500H27M10 6V27M18.500 6V27" stroke={M} strokeWidth="1.300" /></>,
  <><rect x="1" y="1" width="26" height="26" fill={W} stroke={D} strokeWidth="1.600" /><path d="M2 2h24v3.500H2z" fill={G} /><path d="M18.500 6H26.500V26.500H1.500V19.500H18.500z" fill={F} /><path d="M1 6H27" stroke={D} strokeWidth="1.400" /><path d="M1 13H27M1 19.500H27M10 6V27M18.500 6V27" stroke={B} strokeWidth="1.300" /></>,
  <text x="5.500" y="22.500" fontFamily="Open Sans" fontWeight="700" fontSize="24.500" textLength="14" lengthAdjust="spacingAndGlyphs" fill="#1e88cf">R</text>,

  <text x="13.500" y="20" textAnchor="middle" fontFamily="Open Sans" fontWeight="700" fontSize="24" textLength="28" lengthAdjust="spacingAndGlyphs" fill="#1e88cf">Py</text>,
  <>{axes}<path d="M1 5.500H18" stroke="#1e88cf" strokeWidth="1.600" /><circle cx="22" cy="5.500" r="3.500" fill={F} stroke={B} strokeWidth="1.300" /><path d="M1 13H14M1 19H8" stroke={M} strokeWidth="1.600" /><circle cx="16.500" cy="13" r="2" fill={W} stroke={M} strokeWidth="1.400" /><circle cx="10" cy="19" r="2" fill={W} stroke={M} strokeWidth="1.400" /></>,
  <><path d="M10 13H17M15 4V22M15 4H18M15 22H18" stroke={D} strokeWidth="1.600" /><path d="M1 9.500H10.500V16H1zM17.500 1H27V7H17.500zM17.500 10H27V16H17.500zM17.500 19H27V25H17.500z" fill={F} stroke={B} strokeWidth="1.500" /></>,
  <path d="M1 2H27V19H12L5.500 25V19H1Z" fill={W} stroke={B} strokeWidth="1.600" />,
  <><path d="M4 6V1H17L24 7.500V27H4V14" fill={W} stroke={D} strokeWidth="1.500" /><path d="M17 1V8H24" stroke={D} strokeWidth="1.500" /><circle cx="4.500" cy="10.500" r="2.800" fill={F} stroke={B} strokeWidth="1.300" /><path d="M11 12.500H20M8 17.500H17" stroke="#1e88cf" strokeWidth="1.500" /></>,
  <><path d="M7 3H1V7Q1 13 8 13M21 3H27V7Q27 13 20 13" stroke={D} strokeWidth="1.600" /><path d="M7 1H21V12Q21 18 16 18V22H12V18Q7 18 7 12Z" fill={W} stroke={D} strokeWidth="1.600" /><path d="M7 1H21V4.500H7zM8 23H20L21 26.500H7z" fill={F} stroke={B} strokeWidth="1.400" /></>,

  <><path d="M3 0H17L24.500 7.500V28.500H3Z" fill={W} stroke={D} strokeWidth="1.700" /><path d="M16.500 0V8H24.500" stroke={D} strokeWidth="1.500" /><path d="M6 16h4v10H6zM11 20h4v6h-4zM17 13h4v13h-4z" fill={D} /></>,
  <><path d="M12 4H27V24.500H1V19" fill={W} stroke={D} strokeWidth="1.800" /><text x="15" y="19" textAnchor="middle" fontFamily="Open Sans" fontSize="13.500" textLength="20" fill="#1e88cf">123</text><path d="M4 21H24" stroke={M} />{lightning}</>,
  <><path d="M1 15H11V26H1zM15 1H25V11H15z" fill={W} stroke={M} strokeWidth="1.500" /><path d="M9 6H12V12H6z" fill={B} />{lightning}<path d="M14.500 15.500H28.500V18L23.500 23V29H19V23L14.500 18Z" fill={W} stroke={D} strokeWidth="1.500" /></>,
  <><path d="M10.500 1.500H27V13Q21 12 19 16Q15 18 14 20Q13 24 14 26.500H1V15L5 18L10.500 12Z" fill={F} stroke={B} strokeWidth="1.600" /><path d="M13 6H22Q17 9 17 12Q12 13 11 16Q7 19 8 24H4L4 20" fill="#f3f2f1" stroke={B} strokeWidth="1.100" /><path d="M0 0H8.500V12L4.500 16L0 12Z" fill="#e07000" /><circle cx="4" cy="6" r="1.800" fill={W} /><circle cx="23.500" cy="24" r="4.500" fill="#e07000" stroke="#f3f2f1" /><circle cx="26.500" cy="16.500" r="2.600" fill="#e07000" stroke="#f3f2f1" strokeWidth=".8" /></>,
  <><path d="M1 14 9.500 3Q11.500 1 13.500 3.500Q16 1 18.500 3L27 14 18.500 25Q16 27 13.500 24.500Q11.500 27 9.500 25Z" fill={W} stroke="#8a2da5" strokeWidth="1.600" /><path d="M13.500 3.500 10.500 8.500 18.500 18.500 13.500 24.500 10.500 19.500 18.500 9.500Z" fill={W} stroke="#8a2da5" strokeWidth="1.500" /></>,
  <><path d="M1 2.500H19L27 13 18 24.500H1.500L9.500 13.500Z" fill={W} stroke="#0f7ad8" strokeWidth="1.600" /><path d="M19 2.500 3 22M22.500 7.500 9 24" stroke="#0f7ad8" strokeWidth="1.600" /></>,
];

function Visualisations() {
  return (
    <section className="flex w-[271px] shrink-0 flex-col border-r border-[#dad8d6] text-[#323130]">
      <div className="flex h-[59px] items-center justify-between pr-[12px] pl-[12px]">
        <T w={147} className="-mt-[1px] text-[22px] leading-[28px] font-semibold text-[#252423]">Visualisations</T>
        <Chevrons />
      </div>
      <div className="h-[27px] pl-[12px] text-[16.5px] leading-[18px] font-semibold">
        <T w={214}>Générer un élément visuel</T>
      </div>
      <div className="flex h-[55px] gap-[57px] pl-[12px]">
        <div className="h-[48px] w-[48px] rounded-[3px] bg-[#d2d0ce] p-[6px]">
          <Pic x={0} y={0} w={36} h={36}>
            <path d="M0 1H29" stroke="#252423" strokeWidth="2" />
            <path d="M1.500 8.500H34.500V18.500H1.500zM1.500 25H34.500V35H1.500z" fill="#117865" stroke="#f3f2f1" strokeWidth="1.800" />
            <path d="M1 8H35V19H1zM1 24.500H35V35.500H1z" stroke="#252423" strokeWidth="1.700" strokeDasharray="3 2.200" />
          </Pic>
        </div>
        <Pic x={0} y={0} w={36} h={37} className="mt-[6px]">
          <path d="M7 35.500H1V.8H15.500L27 12V14M15.500 .8V12H27" stroke="#252423" strokeWidth="1.600" />
          <path d="M9 33Q14 33 15 29Q17 25 21 27Q25 30 22 34Q17 37 9 33ZM20 26 33 14Q36 13 35 16L23.500 29" fill="#f3f2f1" stroke="#252423" strokeWidth="1.600" />
        </Pic>
      </div>
      <svg width="270" height="14" viewBox="0 0 270 14" fill="none" className="block shrink-0">
        <path d="M0 12H25L36.500 .8 48 12H270" stroke="#8a8886" strokeWidth="1.500" />
      </svg>
      <div className="grid grid-cols-[repeat(6,42px)] gap-y-[13px] pt-[15px] pl-[16px]">
        {visuals.map((v, i) => (
          <svg key={i} width="29" height="29" viewBox="0 0 29 29" fill="none" className="block overflow-visible">{v}</svg>
        ))}
      </div>
      <div className="h-[55px] shrink-0 border-b border-[#dad8d6] pt-[14px] pl-[19px]">
        <svg width="22" height="3" className="mt-[8px]"><path d="M0 0h3v3H0zM9 0h3v3H9zM18 0h3v3h-3z" fill="#323130" /></svg>
      </div>
      <div className="flex min-h-0 flex-1 justify-between">
        <div className="flex flex-col pl-[6px] text-[17px] leading-[24px]">
          <T w={57} className="mt-[13px] ml-[12px] self-start">Valeurs</T>
          <div className="mt-[8px] flex h-[42px] w-[254px] items-center rounded-[3px] border border-dashed border-[#c8c6c4] bg-white pl-[15px]">
            <T w={232} className="-mt-[2px]">Ajouter des champs de don...</T>
          </div>
          <T w={61} className="mt-[16px] ml-[12px] self-start text-[16.5px] font-semibold text-[#484644]">Extraire</T>
          <div className="mt-[13px] flex items-center justify-between pr-[23px] pl-[12px]">
            <T w={96}>Interrapport</T>
            <div className="flex h-[24px] w-[48px] items-center rounded-full border border-[#8a8886] bg-white pl-[6px]">
              <div className="h-[12px] w-[12px] rounded-full bg-[#605e5c]" />
            </div>
          </div>
          <div className="mt-[15px] flex items-center justify-between pr-[23px] pl-[12px]">
            <T w={169} className="mt-[1px]">Garder tous les filtres</T>
            <div className="flex h-[24px] w-[48px] items-center justify-between rounded-full bg-[#117865] pr-[7px] pl-[8px]">
              <svg width="16" height="12" fill="none"><path d="M2 6 6 10 14 2" stroke="#fff" strokeWidth="3.500" /></svg>
              <div className="h-[12px] w-[12px] rounded-full bg-white" />
            </div>
          </div>
        </div>
        <div className="mt-[3px] h-[171px] w-[8px] rounded-full bg-[#d2d0ce]" />
      </div>
    </section>
  );
}

const fields: { name: string; w: number; kind?: "sum" | "date" }[] = [
  { name: "Channel", w: 65 },
  { name: "Currency Code", w: 118 },
  { name: "Customer Name...", w: 140, kind: "sum" },
  { name: "Delivery Region ...", w: 141, kind: "sum" },
  { name: "Order Quantity", w: 120, kind: "sum" },
  { name: "OrderDate", w: 84, kind: "date" },
  { name: "OrderNumber", w: 112 },
  { name: "Product Descrip...", w: 140, kind: "sum" },
  { name: "Ship Date", w: 77, kind: "date" },
  { name: "Total Revenue", w: 111, kind: "sum" },
  { name: "Total Unit Cost", w: 116, kind: "sum" },
  { name: "Unit Price", w: 77, kind: "sum" },
  { name: "Warehouse Code", w: 135 },
];

function Data() {
  return (
    <section className="flex min-w-0 flex-1 flex-col overflow-hidden text-[#323130]">
      <div className="flex h-[59px] w-[290px] items-center pl-[12px]">
        <T w={95} className="-mt-[1px] text-[22px] leading-[28px] font-semibold text-[#252423]">Données</T>
        <Chevrons className="ml-[139px]" />
      </div>
      <div className="mt-[9px] ml-[6px] flex h-[36px] w-[290px] shrink-0 items-center rounded-[5px] border border-[#d2d0ce] border-b-[#605e5c] bg-white pl-[18px]">
        <svg width="22" height="22" viewBox="0 0 22 22" fill="none">
          <circle cx="9" cy="8.500" r="7.700" stroke="#605e5c" strokeWidth="1.500" />
          <path d="M14.500 14 21 20.500" stroke="#605e5c" strokeWidth="1.500" />
        </svg>
        <T w={103} className="mt-[2px] ml-[10px] text-[17.5px] leading-[24px] text-[#706e6c]">Rechercher</T>
      </div>
      <div className="mt-[14px] flex h-[36px] shrink-0 items-center pl-[20px] text-[17px] leading-[24px]">
        <svg width="18" height="11" fill="none"><path d="M.5 1 9 9.500 17.500 1" stroke="#605e5c" strokeWidth="1.500" /></svg>
        <svg width="19" height="19" fill="none" className="ml-[6px]">
          <rect x="1" y="1" width="17" height="17" rx="4" stroke="#252423" strokeWidth="1.700" />
          <path d="M1 6H18M1 13H18M6 1V18M13 1V18" stroke="#252423" strokeWidth="1.300" />
        </svg>
        <T w={100} className="ml-[7px]">Sales Orders</T>
      </div>
      {fields.map((f) => (
        <div key={f.name} className="flex h-[36px] w-[300px] shrink-0 items-center pl-[46px] text-[17px] leading-[24px]">
          <div className="w-[20px]">
            {f.kind === "date" && <svg width="11" height="18" fill="none"><path d="M1 1 9 9 1 17" stroke="#605e5c" strokeWidth="1.500" /></svg>}
          </div>
          <div className="h-[18px] w-[18px] rounded-[3px] border border-[#797775]" />
          <div className="ml-[12px] w-[27px]">
            {f.kind === "sum" && <svg width="17" height="19" fill="none"><path d="M16 1H1.500L9 9.500 1.500 18H16" stroke="#323130" strokeWidth="1.700" /></svg>}
            {f.kind === "date" && (
              <svg width="19" height="19" fill="none" className="-ml-px">
                <rect x="1" y="1" width="17" height="17" rx="3.500" stroke="#252423" strokeWidth="1.700" />
                <path d="M1 5.500H18" stroke="#252423" strokeWidth="1.400" />
                <path d="M5 9.500h2M8.500 9.500h2M12 9.500h2M5 13h2M8.500 13h2" stroke="#252423" strokeWidth="1.800" />
              </svg>
            )}
          </div>
          <T w={f.w} className="mt-[1px]">{f.name}</T>
        </div>
      ))}
    </section>
  );
}

function StatusBar() {
  return (
    <footer className="flex h-[31px] items-center justify-between border-t border-[#dad8d6] pt-[6px] pl-[5px] text-[16.5px] leading-[24px] text-[#484644]">
      <T w={96} className="mt-[1px]">Page 1 sur 1</T>
      <div className="flex items-center pr-[5px] text-[#605e5c]">
        <Pic x={1600} y={911} w={188} h={20}>
          <path d="M1602 921H1608" stroke="#484644" strokeWidth="2" />
          <path d="M1615 920.500H1765" stroke="#605e5c" strokeWidth="1.200" />
          <path d="M1645 912h6v17h-6zM1689 917h2v7h-2z" fill="#605e5c" />
          <path d="M1774 920.500H1784.500M1779.200 915V926" stroke="#484644" strokeWidth="2" />
        </Pic>
        <T w={39} className="-mt-[1px] ml-[17px]">50 %</T>
        <Pic x={0} y={0} w={25} h={19} className="ml-[23px]">
          <rect x="1" y="1" width="23" height="17" stroke="#605e5c" strokeWidth="1.600" />
          <path d="M4.500 8V4.500H8M17 4.500H20.500V8M20.500 11V14.500H17M8 14.500H4.500V11" stroke="#605e5c" strokeWidth="1.500" />
        </Pic>
      </div>
    </footer>
  );
}

export default function App() {
  return (
    <div className="relative flex h-[933px] w-[1897px] flex-col overflow-hidden bg-[#f3f2f1] font-['Open_Sans','Noto_Sans',sans-serif]">
      <Ribbon />
      <Tooltip />
      <div className="flex h-[732px]">
        <Nav />
        <div className="flex w-[1259px] shrink-0 flex-col">
          <div className="flex h-[679px]">
            <Canvas />
            <Filters />
          </div>
          <PageTabs />
        </div>
        <aside className="flex w-[53px] shrink-0 flex-col items-center border-x border-[#dad8d6] pt-[19px]">
          <Chevrons left />
          <div className="mt-[21px] mr-[5px] text-[22.5px] leading-[24px] font-semibold text-[#252423] [writing-mode:vertical-rl]">
            <T w={156}>Mesure rapide</T>
          </div>
        </aside>
        <Visualisations />
        <Data />
      </div>
      <StatusBar />
    </div>
  );
}
